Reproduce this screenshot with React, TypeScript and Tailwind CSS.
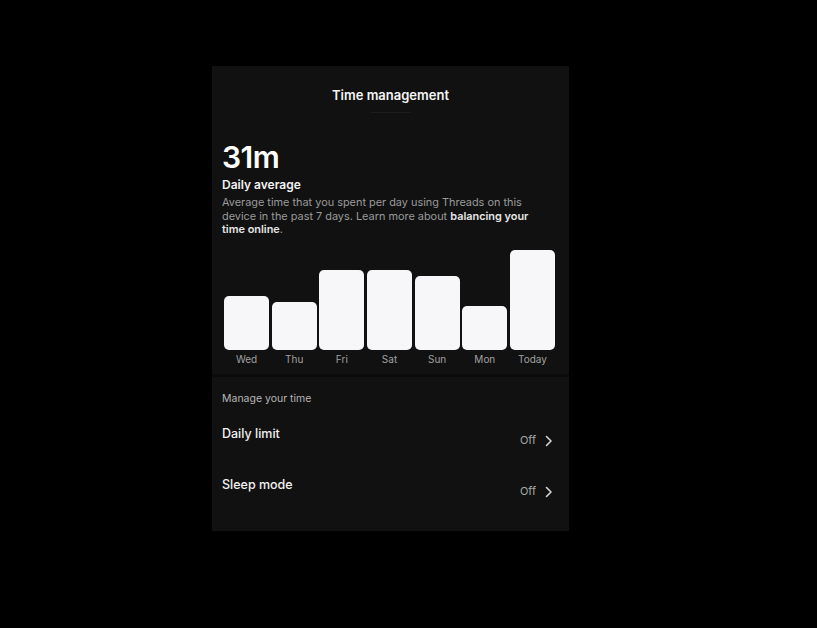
const days = [
  { label: 'Wed', h: 54 },
  { label: 'Thu', h: 48 },
  { label: 'Fri', h: 80 },
  { label: 'Sat', h: 80 },
  { label: 'Sun', h: 74 },
  { label: 'Mon', h: 44 },
  { label: 'Today', h: 100 },
];

function Chevron() {
  return (
    <svg width="8" height="12" viewBox="0 0 8 12" fill="none" className="ml-[9px]">
      <path d="M1.5 1.5 6 6l-4.5 4.5" stroke="#d4d4d4" strokeWidth="1.6" strokeLinecap="round" strokeLinejoin="round" />
    </svg>
  );
}

function SettingRow({ title }: { title: string }) {
  return (
    <div className="flex h-[51px] items-start justify-between pr-[16px]">
      <span className="mt-[5px] text-[12.5px] font-medium text-[#f2f2f2]">{title}</span>
      <span className="mt-[12px] flex items-center text-[11px] text-[#a8a8a8]">
        Off
        <Chevron />
      </span>
    </div>
  );
}

export default function App() {
  return (
    <div
      className="flex min-h-[628px] w-full items-start bg-black pl-[212px] pt-[66px]"
      style={{ fontFamily: 'Inter, "Noto Sans", sans-serif' }}
    >
      <div className="flex h-[465px] w-[357px] flex-col bg-[#111111]">
        {/* Header */}
        <div className="flex h-[39px] flex-col items-center justify-end">
          <span className="text-[13px] font-semibold text-[#f5f5f5]">Time management</span>
        </div>
        <div className="mx-auto mt-[7px] h-px w-[40px] bg-[#1c1c1c]" />

        {/* Summary */}
        <div className="pl-[10px] pr-[17px] pt-[27px]">
          <div className="text-[30px] font-semibold leading-[34px] tracking-[-0.5px] text-white">31m</div>
          <div className="mt-[3px] text-[12px] font-semibold leading-[16px] text-[#f2f2f2]">Daily average</div>
          <p className="mt-[3px] text-[10.9px] leading-[13.5px] text-[#9a9a9a]">
            Average time that you spent per day using Threads on this device in the past 7 days. Learn more about{' '}
            <span className="font-semibold text-[#e6e6e6]">balancing your time online</span>.
          </p>
        </div>

        {/* Chart */}
        <div className="mt-[13px] flex items-end gap-[2.6px] pl-[12px] pr-[14px]">
          {days.map((d) => (
            <div key={d.label} className="flex flex-1 flex-col items-center">
              <div className="w-full rounded-[5px] bg-[#f7f7f9]" style={{ height: d.h }} />
              <span className="mt-[2px] text-[10px] leading-[14px] text-[#a0a0a0]">{d.label}</span>
            </div>
          ))}
        </div>
        <div className="mt-[8px] h-[3px] bg-[#0b0b0b]" />

        {/* Manage */}
        <div className="pl-[10px] pt-[14px]">
          <div className="text-[10.5px] text-[#b5b5b5]">Manage your time</div>
          <div className="mt-[14px]">
            <SettingRow title="Daily limit" />
            <SettingRow title="Sleep mode" />
          </div>
        </div>
      </div>
    </div>
  );
}
